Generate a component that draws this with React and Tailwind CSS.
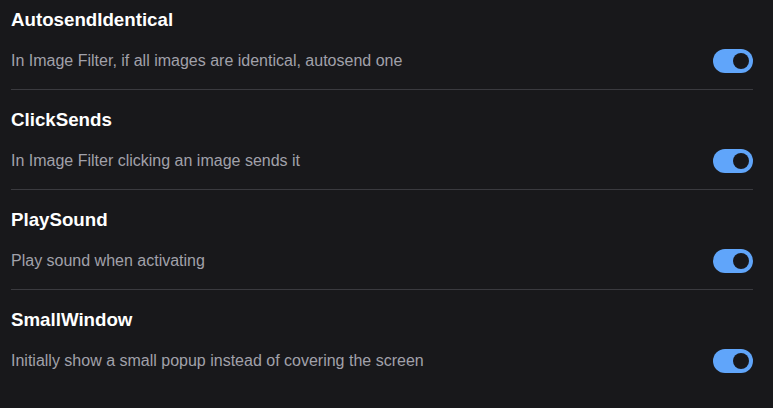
import React, { useState } from "react";

const settings = [
  {
    name: "AutosendIdentical",
    desc: "In Image Filter, if all images are identical, autosend one",
  },
  {
    name: "ClickSends",
    desc: "In Image Filter clicking an image sends it",
  },
  {
    name: "PlaySound",
    desc: "Play sound when activating",
  },
  {
    name: "SmallWindow",
    desc: "Initially show a small popup instead of covering the screen",
  },
];

const Toggle = ({ on, onClick }) => (
  <button
    onClick={onClick}
    className={`relative h-6 w-10 shrink-0 rounded-full ${
      on ? "bg-[#60a5fa]" : "bg-[#3f3f46]"
    }`}
  >
    <span
      className={`absolute top-1 h-4 w-4 rounded-full bg-[#18181b] ${
        on ? "right-1" : "left-1"
      }`}
    />
  </button>
);

const App = () => {
  const [values, setValues] = useState(settings.map(() => true));

  const flip = (i) => {
    setValues(values.map((v, j) => (j === i ? !v : v)));
  };

  return (
    <div
      className="min-h-screen w-full bg-[#18181b] pl-[11px] pr-[20px] pt-[10px]"
      style={{ fontFamily: '"Liberation Sans", Arial, sans-serif' }}
    >
      <div className="flex flex-col gap-5">
        {settings.map((s, i) => (
          <div
            key={s.name}
            className="border-b border-[#3a3a3f] pb-4 last:border-b-0"
          >
            <div className="text-[18.72px] font-bold leading-[20px] text-white">
              {s.name}
            </div>
            <div className="mt-[19px] flex items-center justify-between">
              <span className="text-[16px] leading-6 text-[#a1a1aa]">
                {s.desc}
              </span>
              <Toggle on={values[i]} onClick={() => flip(i)} />
            </div>
          </div>
        ))}
      </div>
    </div>
  );
};

export default App;
